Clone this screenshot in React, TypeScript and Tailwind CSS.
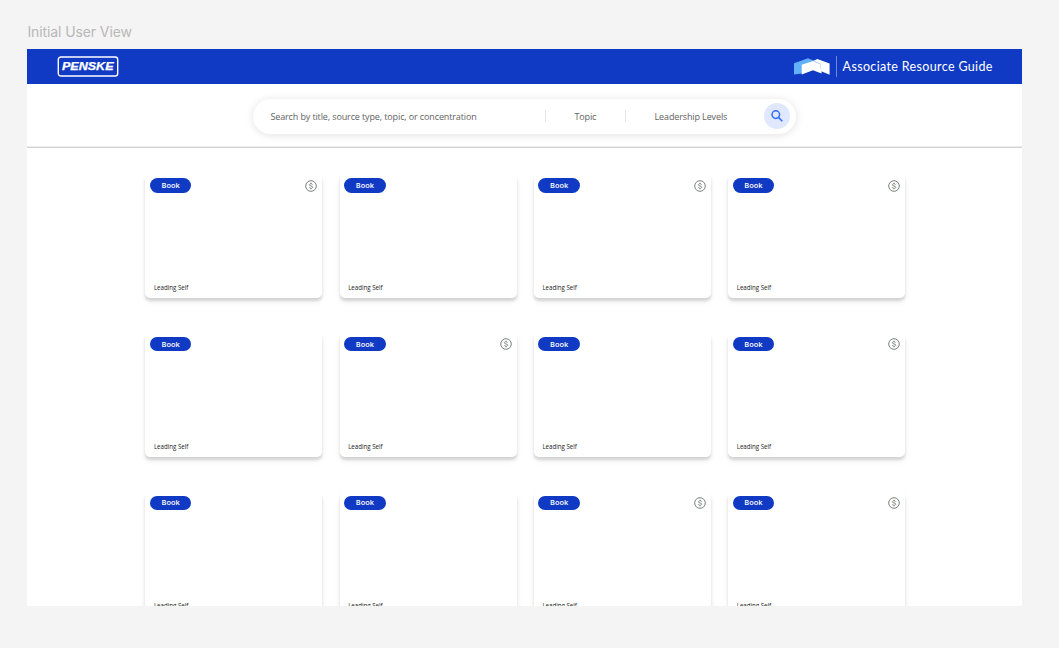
interface Resource {
    id: number
    paid: boolean
}

const PAID = [true, false, true, true, false, true, false, true, false, false, true, true]

const RESOURCES: Resource[] = PAID.map((paid, id) => ({ id, paid }))

function PenskeLogo() {
    return (
        <svg viewBox="0 0 62 22" className="h-[22px] w-[62px]" role="img" aria-label="Penske">
            <rect x="1.3" y="1" width="59.4" height="19" rx="2.6" fill="none" stroke="#fff" strokeWidth="1.4" />
            <text
                x="5"
                y="14.3"
                fill="#fff"
                stroke="#fff"
                strokeWidth="0.25"
                fontFamily="'Liberation Sans', Arial, sans-serif"
                fontWeight="700"
                fontStyle="italic"
                fontSize="10"
                textLength="51.5"
                lengthAdjust="spacingAndGlyphs"
            >
                PENSKE
            </text>
        </svg>
    )
}

function GuideMark() {
    return (
        <svg viewBox="0 0 36 18" className="h-[18px] w-9" aria-hidden="true">
            <path d="M0 5.2 14 .2 21 3.2 8 15.5 0 16.6Z" fill="#62b0f8" />
            <path d="M7.7 6.8 19 3 27.5 6.4V15.4L19 12.2 7.7 16.6Z" fill="#fff" />
            <path d="M19.2 3 23.3 1 35.6 5.4V16.8L26 12.8V6Z" fill="#fff" />
            <path d="M19.4 2.8 26.8 6v5" fill="none" stroke="#a9cdf9" strokeWidth="0.7" />
        </svg>
    )
}

function Header() {
    return (
        <header className="flex h-[35px] shrink-0 items-center justify-between bg-[#113ac4] pr-[28.8px] pl-[29.6px]">
            <PenskeLogo />
            <div className="flex items-center">
                <GuideMark />
                <div className="ml-[6px] h-[21px] w-px bg-[#7089dc]" />
                <span className="ml-[6px] w-[150.5px] pt-[1.5px] font-[Lato,sans-serif] text-[12.5px] leading-none tracking-[0.35px] whitespace-nowrap text-white">
                    Associate Resource Guide
                </span>
            </div>
        </header>
    )
}

function SearchBar() {
    return (
        <div className="flex h-16 shrink-0 border-b border-[#d2d2d2] pt-[15px] pl-[226px] shadow-[inset_0_-1px_0_#ececec]">
            <div className="flex h-[34.5px] w-[542.5px] items-center rounded-full bg-white pr-1.5 pl-[17px] text-[9px] tracking-[-0.12px] text-[#626262] shadow-[0_1px_9px_rgba(0,0,0,0.12)]">
                <span className="w-[274.5px] whitespace-nowrap">Search by title, source type, topic, or concentration</span>
                <div className="h-3 w-px bg-[#e4e4e4]" />
                <span className="w-[79px] text-center">Topic</span>
                <div className="h-3 w-px bg-[#e4e4e4]" />
                <span className="w-[130px] text-center">Leadership Levels</span>
                <button type="button" aria-label="Search" className="ml-auto flex size-[26px] items-center justify-center rounded-full bg-[#dfe8ff]">
                    <svg viewBox="0 0 12 12" className="size-3" fill="none" stroke="#316bff" strokeWidth="1.5" aria-hidden="true">
                        <circle cx="4.8" cy="4.6" r="3.8" />
                        <path d="m7.5 7.4 3.8 3.8" />
                    </svg>
                </button>
            </div>
        </div>
    )
}

function PaidIcon() {
    return (
        <svg viewBox="0 0 12 12" className="mr-[0.5px] size-3" fill="none" stroke="#7b827d" aria-hidden="true">
            <circle cx="6" cy="6" r="5.3" strokeWidth="1" />
            <path d="M7.7 4.6C7.4 3.9 6.8 3.7 6 3.7c-.9 0-1.6.4-1.6 1.1C4.4 6.4 7.7 5.5 7.7 7.2 7.7 7.9 7 8.3 6 8.3c-.9 0-1.5-.3-1.8-1M6 2.7v1M6 8.3v1" strokeWidth="0.95" />
        </svg>
    )
}

function ResourceCard({ resource }: { resource: Resource }) {
    return (
        <article className="flex h-[124px] flex-col justify-between rounded-[5px] bg-white px-[4.5px] pt-1 pb-[5.1px] shadow-[0_3px_3px_rgba(0,0,0,0.14),0_4px_7px_rgba(0,0,0,0.05)]">
            <div className="flex items-center justify-between">
                <span className="flex h-[14.5px] w-[41.5px] items-center justify-center rounded-full bg-[#113ac4] text-[7.4px] font-semibold text-white">
                    Book
                </span>
                {resource.paid && <PaidIcon />}
            </div>
            <span className="pl-1 text-[6.2px] leading-[10px] tracking-[-0.03px] text-[#222]">Leading Self</span>
        </article>
    )
}

export default function App() {
    return (
        <div className="h-[648px] w-[1059px] overflow-hidden bg-[#f4f4f4] pt-6 pl-[27.4px] font-['Open_Sans','Noto_Sans',sans-serif]">
            <p className="h-[25px] font-['Inter',sans-serif] text-[14px] leading-[15px] tracking-[-0.1px] text-[#b8b8b8]">Initial User View</p>
            <main className="flex h-[557px] w-[994.5px] flex-col overflow-hidden bg-white">
                <Header />
                <SearchBar />
                <div className="ml-[118px] grid w-[759.7px] grid-cols-4 gap-x-[17.4px] gap-y-[34.7px] pt-[26.3px]">
                    {RESOURCES.map((resource) => (
                        <ResourceCard key={resource.id} resource={resource} />
                    ))}
                </div>
            </main>
        </div>
    )
}
